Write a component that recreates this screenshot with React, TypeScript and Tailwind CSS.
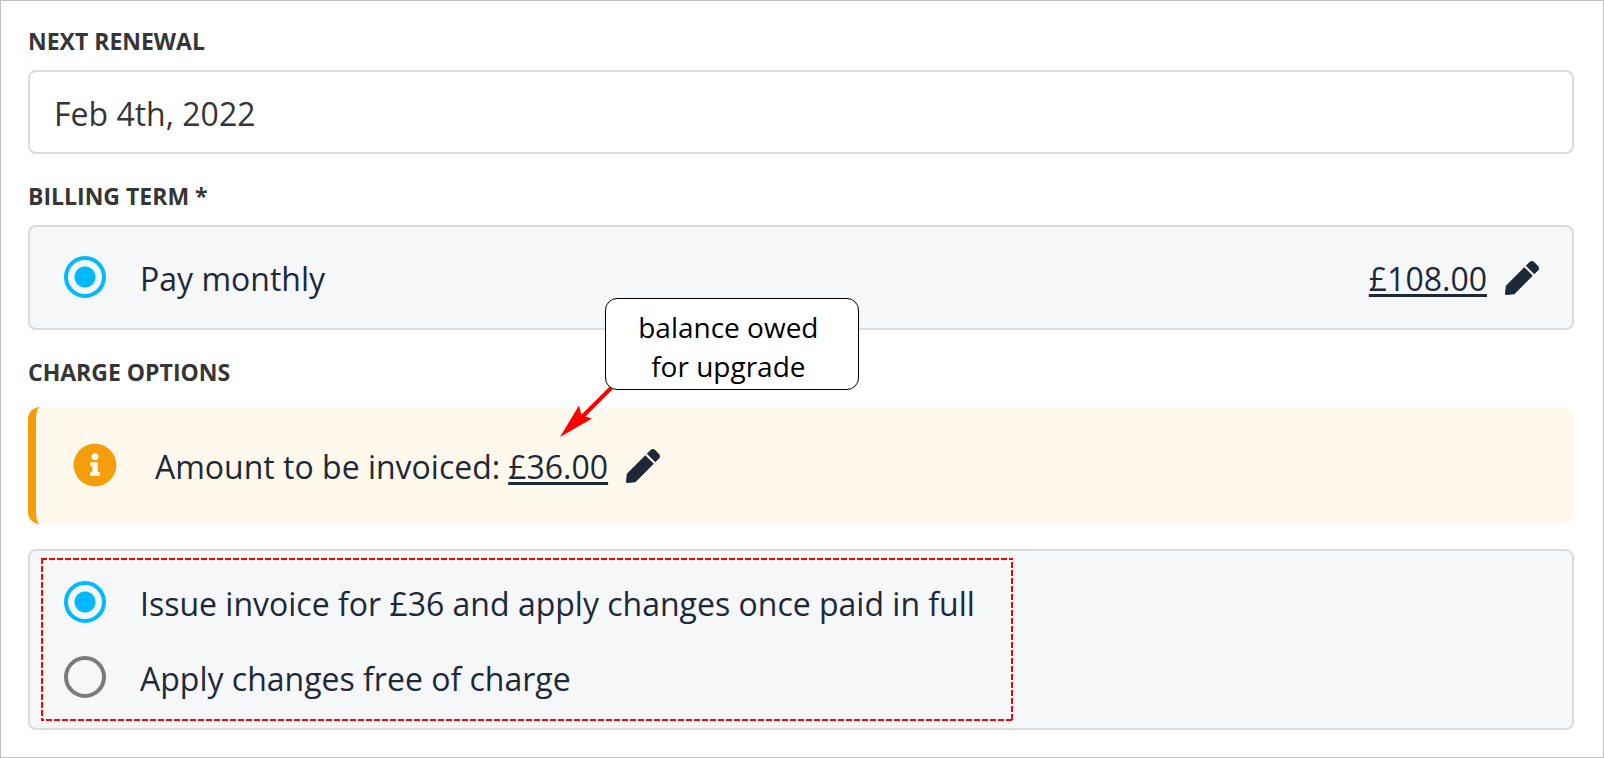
import { useState } from "react";
import type { ReactNode } from "react";
import { FaInfoCircle, FaPen } from "react-icons/fa";

const textClass = "pt-1 leading-[44px]";
const headingClass = "text-[23px] leading-8 font-bold uppercase text-[#363636]";
const panelClass = "rounded-lg border-2 border-[#dbdbdb] bg-[#f5f7f9]";

function RadioRow({
  name,
  label,
  checked,
  onSelect,
}: {
  name: string;
  label: string;
  checked: boolean;
  onSelect: () => void;
}) {
  return (
    <label className="flex cursor-pointer items-center gap-[34px]">
      <input
        type="radio"
        name={name}
        checked={checked}
        onChange={onSelect}
        className="size-[42px] shrink-0 appearance-none rounded-full border-4 border-[#7b7b7b] bg-transparent checked:border-[#00b9ff] checked:bg-[radial-gradient(circle,#00b9ff_10px,transparent_11px)]"
      />
      <span className={textClass}>{label}</span>
    </label>
  );
}

function EditableAmount({ amount, label, children }: { amount: string; label: string; children?: ReactNode }) {
  return (
    <span className="flex items-center gap-[18px]">
      <span className={`relative ${textClass}`}>
        <a href="#edit" className="underline decoration-[3px] underline-offset-[3px]">
          {amount}
        </a>
        {children}
      </span>
      <button type="button" aria-label={label} className="cursor-pointer pt-0.5">
        <FaPen className="size-[34px]" />
      </button>
    </span>
  );
}

function Callout() {
  return (
    <>
      <svg className="absolute -top-[55px] left-[52px] h-[54px] w-[54px]" viewBox="0 0 54 54" aria-hidden="true">
        <path d="M52 1 L19 34" stroke="#ff0000" strokeWidth="4" fill="none" />
        <path d="M0 51 L19 19.500 L21.500 29.500 L32 32.500 Z" fill="#ff0000" />
      </svg>
      <span className="absolute bottom-[99px] left-[97px] rounded-xl border border-black bg-white pt-[9px] pr-[39px] pb-[3px] pl-8 text-center text-[28px] leading-[39px] whitespace-nowrap text-black">
        balance owed
        <br />
        for upgrade
      </span>
    </>
  );
}

export default function App() {
  const [charge, setCharge] = useState("invoice");

  return (
    <main className="flex min-h-screen flex-col border border-[#bfbfbf] bg-white pt-6 pr-[29px] pb-[27px] pl-[27px] font-['Open_Sans',sans-serif] text-[32px] text-[#1e2938]">
      <label htmlFor="renewal" className={headingClass}>
        Next renewal
      </label>
      <input
        id="renewal"
        type="text"
        defaultValue="Feb 4th, 2022"
        className="mt-[13px] h-[84px] w-full rounded-lg border-2 border-[#dbdbdb] bg-white px-6 pt-0.5 text-[#363636]"
      />

      <h2 className={`mt-[26px] ${headingClass}`}>Billing term *</h2>
      <section className={`mt-[13px] flex items-center justify-between pt-[26px] pr-[33px] pb-[27px] pl-[34px] ${panelClass}`}>
        <RadioRow name="term" label="Pay monthly" checked onSelect={() => {}} />
        <EditableAmount amount="£108.00" label="Edit monthly price" />
      </section>

      <h2 className={`mt-[26px] ${headingClass}`}>Charge options</h2>
      <div className="mt-[19px] flex items-center rounded-xl border-l-8 border-[#f59e0b] bg-[#fff8ec] pt-[34px] pb-[35px] pl-[37px]">
        <FaInfoCircle className="mr-[38px] size-11 shrink-0 text-[#f59e0b]" />
        <span className={`mr-2 ${textClass}`}>Amount to be invoiced:</span>
        <EditableAmount amount="£36.00" label="Edit amount to be invoiced">
          <Callout />
        </EditableAmount>
      </div>

      <section className={`mt-[25px] p-[7px] pl-[11px] ${panelClass}`}>
        <div className="relative flex w-fit flex-col gap-[27px] py-5 pr-[38px] pl-[23px]">
          <svg className="pointer-events-none absolute inset-0 size-full overflow-hidden" aria-hidden="true">
            <rect
              width="100%"
              height="100%"
              fill="none"
              stroke="#ff0000"
              strokeWidth="4"
              strokeDasharray="6 2"
              shapeRendering="crispEdges"
            />
          </svg>
          <RadioRow
            name="charge"
            label="Issue invoice for £36 and apply changes once paid in full"
            checked={charge === "invoice"}
            onSelect={() => setCharge("invoice")}
          />
          <RadioRow
            name="charge"
            label="Apply changes free of charge"
            checked={charge === "free"}
            onSelect={() => setCharge("free")}
          />
        </div>
      </section>
    </main>
  );
}
